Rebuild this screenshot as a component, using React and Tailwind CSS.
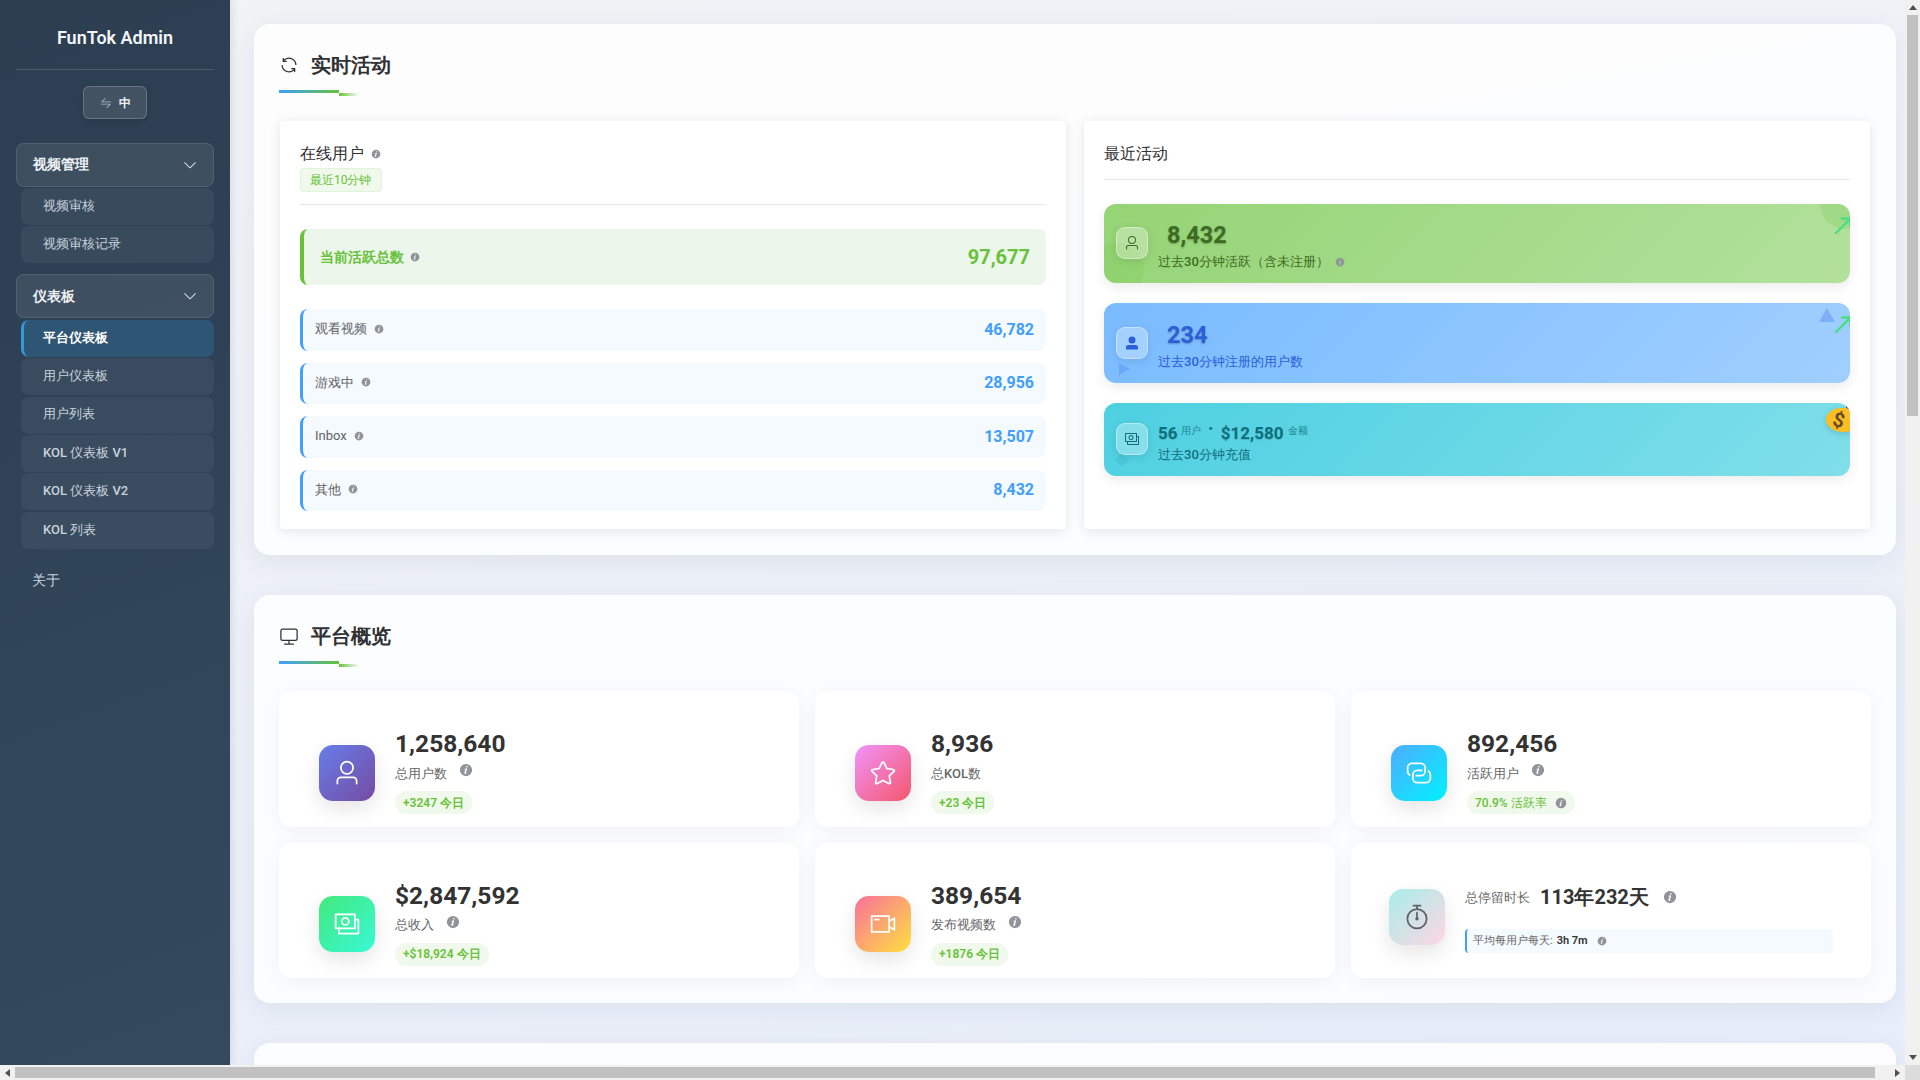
const P = {
  refresh: ["M771.776 794.88A384 384 0 0 1 128 512h64a320 320 0 0 0 555.712 216.448H654.72a32 32 0 1 1 0-64h149.056a32 32 0 0 1 32 32v148.928a32 32 0 1 1-64 0v-50.56zM276.288 295.616h92.992a32 32 0 0 1 0 64H220.16a32 32 0 0 1-32-32V178.56a32 32 0 0 1 64 0v50.56A384 384 0 0 1 896.128 512h-64a320 320 0 0 0-555.776-216.384z"],
  monitor: ["M544 768v128h192a32 32 0 1 1 0 64H288a32 32 0 1 1 0-64h192V768H192A128 128 0 0 1 64 640V256a128 128 0 0 1 128-128h640a128 128 0 0 1 128 128v384a128 128 0 0 1-128 128zM192 192a64 64 0 0 0-64 64v384a64 64 0 0 0 64 64h640a64 64 0 0 0 64-64V256a64 64 0 0 0-64-64z"],
  user: ["M512 512a192 192 0 1 0 0-384 192 192 0 0 0 0 384m0 64a256 256 0 1 1 0-512 256 256 0 0 1 0 512m320 320v-96a96 96 0 0 0-96-96H288a96 96 0 0 0-96 96v96a32 32 0 1 1-64 0v-96a160 160 0 0 1 160-160h448a160 160 0 0 1 160 160v96a32 32 0 1 1-64 0"],
  userFilled: ["M288 320a224 224 0 1 0 448 0 224 224 0 1 0-448 0m544 608H160a32 32 0 0 1-32-32v-96a160 160 0 0 1 160-160h448a160 160 0 0 1 160 160v96a32 32 0 0 1-32 32z"],
  money: [
    "M256 640v192h640V384H768v-64h150.976c14.272 0 19.456 1.472 24.64 4.288a29.056 29.056 0 0 1 12.16 12.096c2.752 5.184 4.224 10.368 4.224 24.64v493.952c0 14.272-1.472 19.456-4.288 24.64a29.056 29.056 0 0 1-12.096 12.16c-5.184 2.752-10.368 4.224-24.64 4.224H233.024c-14.272 0-19.456-1.472-24.64-4.288a29.056 29.056 0 0 1-12.16-12.096c-2.688-5.184-4.224-10.368-4.224-24.576V640z",
    "M768 192H128v448h640zm64-22.976v493.952c0 14.272-1.472 19.456-4.288 24.64a29.056 29.056 0 0 1-12.096 12.16c-5.184 2.752-10.368 4.224-24.64 4.224H105.024c-14.272 0-19.456-1.472-24.64-4.288a29.056 29.056 0 0 1-12.16-12.096C65.536 682.432 64 677.248 64 663.04V169.024c0-14.272 1.472-19.456 4.288-24.64a29.056 29.056 0 0 1 12.096-12.16C85.568 129.536 90.752 128 104.96 128h685.952c14.272 0 19.456 1.472 24.64 4.288a29.056 29.056 0 0 1 12.16 12.096c2.752 5.184 4.224 10.368 4.224 24.64z",
    "M448 576a160 160 0 1 1 0-320 160 160 0 0 1 0 320m0-64a96 96 0 1 0 0-192 96 96 0 0 0 0 192",
  ],
  star: ["m512 747.84 228.16 119.936a6.4 6.4 0 0 0 9.28-6.72l-43.52-254.08 184.512-179.904a6.4 6.4 0 0 0-3.52-10.88l-255.104-37.12L517.76 147.904a6.4 6.4 0 0 0-11.52 0L392.192 379.072l-255.104 37.12a6.4 6.4 0 0 0-3.52 10.88L318.08 606.976l-43.584 254.08a6.4 6.4 0 0 0 9.28 6.72zM313.6 924.48a70.4 70.4 0 0 1-102.144-74.24l37.888-220.928L88.96 472.96A70.4 70.4 0 0 1 128 352.896l221.76-32.256 99.2-200.96a70.4 70.4 0 0 1 126.208 0l99.2 200.96 221.824 32.256a70.4 70.4 0 0 1 39.04 120.064L774.72 629.376l37.888 220.928a70.4 70.4 0 0 1-102.144 74.24L512 820.096l-198.4 104.32z"],
  video: ["M704 768V256H128v512zm64-416 192-96v512l-192-96v128a32 32 0 0 1-32 32H96a32 32 0 0 1-32-32V224a32 32 0 0 1 32-32h640a32 32 0 0 1 32 32zm0 71.552v176.896l128 64V359.552zM192 320h192v64H192z"],
  connection: [
    "M640 384v64H448a128 128 0 0 0-128 128v128a128 128 0 0 0 128 128h320a128 128 0 0 0 128-128V576a128 128 0 0 0-64-110.848V394.88c74.56 26.368 128 97.472 128 181.056v128a192 192 0 0 1-192 192H448a192 192 0 0 1-192-192V576a192 192 0 0 1 192-192z",
    "M384 640v-64h192a128 128 0 0 0 128-128V320a128 128 0 0 0-128-128H256a128 128 0 0 0-128 128v128a128 128 0 0 0 64 110.848v70.272A192.064 192.064 0 0 1 64 448V320a192 192 0 0 1 192-192h320a192 192 0 0 1 192 192v128a192 192 0 0 1-192 192z",
  ],
  timer: [
    "M512 896a320 320 0 1 0 0-640 320 320 0 0 0 0 640m0 64a384 384 0 1 1 0-768 384 384 0 0 1 0 768",
    "M512 320a32 32 0 0 1 32 32l-.512 224a32 32 0 1 1-64 0L480 352a32 32 0 0 1 32-32",
    "M448 576a64 64 0 1 0 128 0 64 64 0 1 0-128 0m96-448v128h-64V128h-96a32 32 0 0 1 0-64h256a32 32 0 1 1 0 64z",
  ],
  info: ["M512 64a448 448 0 1 1 0 896.064A448 448 0 0 1 512 64m67.2 275.072c33.28 0 60.288-23.104 60.288-57.344s-27.072-57.344-60.288-57.344c-33.28 0-60.16 23.104-60.16 57.344s26.88 57.344 60.16 57.344M590.912 699.2c0-6.848 2.368-24.64 1.024-34.752l-52.608 60.544c-10.88 11.456-24.512 19.392-30.912 17.28a12.992 12.992 0 0 1-8.256-14.72l87.68-276.992c7.168-35.136-12.544-67.2-54.336-71.296-44.096 0-108.992 44.736-148.48 101.504 0 6.784-1.28 23.68.064 33.792l52.544-60.608c10.88-11.328 23.552-19.328 29.952-17.152a12.8 12.8 0 0 1 7.808 16.128L388.48 728.576c-10.048 32.256 8.96 63.872 55.04 71.04 67.84 0 107.904-43.648 147.456-100.416z"],
  down: ["M831.872 340.864 512 652.672 192.128 340.864a30.592 30.592 0 0 0-42.752 0 29.12 29.12 0 0 0 0 41.6L489.664 714.24a32 32 0 0 0 44.672 0l340.288-331.712a29.12 29.12 0 0 0 0-41.728 30.592 30.592 0 0 0-42.752 0z"],
  swap: ["M118.656 438.656a32 32 0 0 1 0-45.248L416 96l4.48-3.776A32 32 0 0 1 461.248 96l3.712 4.48a32.064 32.064 0 0 1-3.712 40.832L218.56 384H928a32 32 0 1 1 0 64H141.248a32 32 0 0 1-22.592-9.344zM64 608a32 32 0 0 1 32-32h786.752a32 32 0 0 1 22.656 54.592L608 928l-4.48 3.776a32.064 32.064 0 0 1-40.832-49.024L805.632 640H96a32 32 0 0 1-32-32"],
};

function Ic({ name, className }) {
  return (
    <svg viewBox="0 0 1024 1024" fill="currentColor" className={"shrink-0 " + className}>
      {P[name].map((d, i) => <path key={i} d={d} />)}
    </svg>
  );
}

function SubItem({ children, active }) {
  return (
    <div className={active
      ? "flex h-[37px] items-center ml-[5px] mb-[1.4px] rounded-[8px] border-l-[3px] border-[#3498db] bg-[#2f5574] pb-[2px] pl-[19px] text-[13px] font-semibold text-white"
      : "flex h-[37px] items-center ml-[5px] mb-[1.4px] rounded-[8px] bg-white/5 pb-[2px] pl-[22px] text-[13px] text-[#c9d2dc]"}>
      {children}
    </div>
  );
}

function Group({ title }) {
  return (
    <div className="flex h-[43.5px] items-center justify-between rounded-[8px] border border-white/10 bg-white/8 pl-[16px] pr-[15px] text-[14px] font-bold text-[#eef1f4]">
      <span>{title}</span>
      <Ic name="down" className="h-[16px] w-[16px] text-[#dfe5ea]" />
    </div>
  );
}

function Sidebar() {
  return (
    <aside className="flex h-full w-[230px] shrink-0 flex-col bg-[linear-gradient(160deg,#2c3e50,#34495e)] px-[16px] shadow-[2px_0_8px_rgba(0,0,0,0.1)]">
      <div className="flex h-[70px] items-center justify-center border-b border-white/15 pt-[6px] text-[18px] font-semibold text-[#f2f4f6]">FunTok Admin</div>
      <div className="mt-[16px] flex justify-center">
        <div className="flex h-[33px] w-[64px] items-center justify-center gap-[7px] rounded-[6px] border border-white/20 bg-white/10 text-[12px] font-bold text-[#eef1f4] shadow-[0_2px_6px_rgba(0,0,0,0.12)]">
          <Ic name="swap" className="h-[12px] w-[12px] text-[#aeb8c2]" />
          <span>中</span>
        </div>
      </div>
      <div className="mt-[24px]">
        <Group title="视频管理" />
        <div className="mt-[1.5px] mb-[11px]">
          <SubItem>视频审核</SubItem>
          <SubItem>视频审核记录</SubItem>
        </div>
        <Group title="仪表板" />
        <div className="mt-[2px]">
          <SubItem active>平台仪表板</SubItem>
          <SubItem>用户仪表板</SubItem>
          <SubItem>用户列表</SubItem>
          <SubItem><span className="font-medium">KOL</span>&nbsp;仪表板&nbsp;<span className="font-medium">V1</span></SubItem>
          <SubItem><span className="font-medium">KOL</span>&nbsp;仪表板&nbsp;<span className="font-medium">V2</span></SubItem>
          <SubItem><span className="font-medium">KOL</span>&nbsp;列表</SubItem>
        </div>
      </div>
      <div className="mt-[20px] pl-[16px] text-[14px] text-[#c9d2dc]">关于</div>
    </aside>
  );
}

function SectionHead({ icon, title }) {
  return (
    <div className="h-[96px] pl-[25px]">
      <div className="flex h-[81px] items-center gap-[12px]">
        <Ic name={icon} className="h-[20px] w-[20px] text-[#303133]" />
        <h2 className="text-[20px] font-bold leading-[28px] text-[#303133]">{title}</h2>
      </div>
      <div className="-mt-[15px] flex">
        <div className="h-[3px] w-[60px] bg-[linear-gradient(90deg,#409eff,#67c23a)]" />
        <div className="mt-[3px] h-[3px] w-[20px] bg-[linear-gradient(90deg,#67c23a,transparent)]" />
      </div>
    </div>
  );
}

function Row({ label, value }) {
  return (
    <div className="flex h-[41.5px] items-center justify-between rounded-[8px] border-l-[3px] border-[#409eff] bg-[#f5faff] pl-[12px] pr-[12px]">
      <div className="flex items-center gap-[7px] pb-[2px] text-[13px] text-[#606266]">
        <span>{label}</span>
        <Ic name="info" className="h-[10px] w-[10px] text-[#909399]" />
      </div>
      <span className="text-[16px] font-bold text-[#409eff]">{value}</span>
    </div>
  );
}

function OnlineCard() {
  return (
    <div className="w-[786px] rounded-[4px] bg-white px-[20px] pb-[18px] pt-[21px] shadow-[0_2px_12px_rgba(0,0,0,0.1)]">
      <div className="h-[62.5px] border-b border-[#e4e7ed]">
        <div className="flex h-[24px] items-center gap-[7px] text-[16px] text-[#303133]">
          <span>在线用户</span>
          <Ic name="info" className="h-[10px] w-[10px] text-[#909399]" />
        </div>
        <span className="mt-[2px] inline-flex h-[24px] items-center rounded-[4px] border border-[#e1f3d8] bg-[#f0f9eb] px-[9px] text-[12px] text-[#67c23a]">最近10分钟</span>
      </div>
      <div className="mt-[24.5px] flex h-[56px] items-center justify-between rounded-[8px] border-l-[4px] border-[#67c23a] bg-[#edf6ea] pl-[16px] pr-[16px]">
        <div className="flex items-center gap-[6px] text-[14px] font-bold text-[#67c23a]">
          <span>当前活跃总数</span>
          <Ic name="info" className="h-[10px] w-[10px] text-[#909399]" />
        </div>
        <span className="text-[20px] font-bold text-[#67c23a]">97,677</span>
      </div>
      <div className="mt-[24px] flex flex-col gap-[12px]">
        <Row label="观看视频" value="46,782" />
        <Row label="游戏中" value="28,956" />
        <Row label="Inbox" value="13,507" />
        <Row label="其他" value="8,432" />
      </div>
    </div>
  );
}

function CardIcon({ name, tint }) {
  return (
    <div className={"z-10 mt-[6px] flex h-[32px] w-[32px] shrink-0 items-center justify-center rounded-[9px] border border-white/40 bg-white/30 shadow-[0_2px_8px_rgba(0,0,0,0.1)] " + tint}>
      <Ic name={name} className="h-[16px] w-[16px]" />
    </div>
  );
}

function Arrow({ className }) {
  return (
    <svg viewBox="0 0 20 20" fill="none" stroke="#4ade80" strokeWidth="2.4" strokeLinecap="round" strokeLinejoin="round" className={"absolute h-[20px] w-[20px] " + className}>
      <path d="M2 17 16 3M8 2.5h8.5V11" />
    </svg>
  );
}

function RecentCard() {
  return (
    <div className="flex-1 rounded-[4px] bg-white px-[20px] pt-[20px] shadow-[0_2px_12px_rgba(0,0,0,0.1)]">
      <div className="h-[39px] border-b border-[#e4e7ed] text-[16px] leading-[26px] text-[#303133]">最近活动</div>
      <div className="mt-[24px] flex flex-col gap-[20px]">
        <div className="relative flex h-[79px] gap-[10px] overflow-hidden rounded-[12px] bg-[linear-gradient(135deg,#95d475,#b3e19d)] pl-[12px] pt-[17px] shadow-[0_4px_12px_rgba(0,0,0,0.08)]">
          <div className="absolute -bottom-[14px] -left-[14px] h-[54px] w-[54px] rounded-full bg-[#67c23a]/15" />
          <div className="absolute -right-[20px] -top-[25px] h-[50px] w-[50px] rounded-full bg-[#67c23a]/20" />
          <Arrow className="-right-[4px] top-[12px]" />
          <CardIcon name="user" tint="text-[#3d6b21]" />
          <div className="relative text-[#3d6b21]">
            <div className="pl-[9px] text-[23.5px] font-bold leading-[28px] [text-shadow:0_1px_2px_rgba(0,0,0,0.25)]">8,432</div>
            <div className="mt-[3px] flex items-center gap-[6px] text-[13px] leading-[20px]">
              <span>过去<span className="font-medium">30</span>分钟活跃（含未注册）</span>
              <Ic name="info" className="h-[10px] w-[10px] text-[#909399]" />
            </div>
          </div>
        </div>
        <div className="relative flex h-[80px] gap-[10px] overflow-hidden rounded-[12px] bg-[linear-gradient(135deg,#79bbff,#a0cfff)] pl-[12px] pt-[18px] shadow-[0_4px_12px_rgba(0,0,0,0.08)]">
          <div className="absolute left-[15px] top-[60px] h-0 w-0 border-y-[6px] border-l-[11px] border-y-transparent border-l-[#5a9cf5]/60" />
          <div className="absolute right-[15px] top-[5px] h-0 w-0 border-x-[8px] border-b-[14px] border-x-transparent border-b-[#5a8cf0]/45" />
          <Arrow className="-right-[4px] top-[12px]" />
          <CardIcon name="userFilled" tint="text-[#2b5fd9]" />
          <div className="relative text-[#2b5fd9]">
            <div className="pl-[9px] text-[23.5px] font-bold leading-[28px] [text-shadow:0_1px_2px_rgba(0,0,0,0.25)]">234</div>
            <div className="mt-[3px] text-[13px] leading-[20px]">过去<span className="font-medium">30</span>分钟注册的用户数</div>
          </div>
        </div>
        <div className="relative mb-[53px] flex h-[73px] gap-[10px] overflow-hidden rounded-[12px] bg-[linear-gradient(135deg,#4dd0e1,#80deea)] pl-[12px] pt-[14px] shadow-[0_4px_12px_rgba(0,0,0,0.08)]">
          <div className="absolute bottom-[11px] left-[13px] h-[10px] w-[10px] rotate-45 bg-[#26a6b8]/20" />
          <div className="absolute right-0 top-[1px] h-[5px] w-[4px] rounded-[2px] bg-[#6b4a2a]" />
          <div className="absolute -right-[8px] top-[5px] flex h-[24px] w-[32px] items-center justify-start rounded-[50%_50%_46%_54%] bg-[#fbbf24] pl-[7px] text-[20px] font-bold text-[#6b4a2a] shadow-[0_2px_6px_rgba(0,0,0,0.15)]">
            <span className="rotate-[15deg] leading-none">$</span>
          </div>
          <CardIcon name="money" tint="text-[#0f6f7d]" />
          <div className="relative text-[#0f6f7d]">
            <div className="flex h-[33px] items-center">
              <span className="text-[17px] font-bold leading-none [text-shadow:0_1px_1px_rgba(0,0,0,0.15)]">56</span>
              <span className="ml-[3px] -mt-[6px] text-[10px] opacity-80">用户</span>
              <span className="ml-[8px] -mt-[9px] text-[12px] font-bold">•</span>
              <span className="ml-[8px] text-[17px] font-bold leading-none [text-shadow:0_1px_1px_rgba(0,0,0,0.15)]">$12,580</span>
              <span className="ml-[4px] -mt-[6px] text-[10px] opacity-80">金额</span>
            </div>
            <div className="-mt-[5.5px] text-[13px] leading-[20px]">过去<span className="font-medium">30</span>分钟充值</div>
          </div>
        </div>
      </div>
    </div>
  );
}

function StatCard({ icon, grad, value, label, info, pill, pillInfo }) {
  return (
    <div className="flex items-center gap-[20px] rounded-[12px] bg-white pb-[12px] pl-[40px] pt-[40px] shadow-[0_4px_20px_rgba(0,0,0,0.05)]">
      <div className={"flex h-[56px] w-[56px] shrink-0 items-center justify-center rounded-[14px] text-white shadow-[0_8px_20px_rgba(0,0,0,0.1)] " + grad}>
        <Ic name={icon} className="h-[28px] w-[28px]" />
      </div>
      <div>
        <div className="pt-[1px] text-[24.5px] font-bold leading-[23px] text-[#333]">{value}</div>
        <div className="mt-[8px] flex h-[20px] items-center gap-[12px] text-[13px] text-[#666]">
          <span>{label}</span>
          {info && <Ic name="info" className="-mt-[6px] h-[14px] w-[14px] text-[#909399]" />}
        </div>
        <div className={"mt-[8px] inline-flex h-[23px] items-center gap-[8px] rounded-full bg-[#f0f9eb] px-[8px] text-[12px] text-[#67c23a] " + (pillInfo ? "font-medium" : "font-semibold")}>
          <span>{pill}</span>
          {pillInfo && <Ic name="info" className="h-[12px] w-[12px] text-[#909399]" />}
        </div>
      </div>
    </div>
  );
}

function DurationCard() {
  return (
    <div className="flex items-center gap-[20px] rounded-[12px] bg-white px-[38px] pt-[13px] shadow-[0_4px_20px_rgba(0,0,0,0.05)]">
      <div className="flex h-[56px] w-[56px] shrink-0 items-center justify-center rounded-[14px] bg-[linear-gradient(135deg,#a8edea,#fed6e3)] text-[#606266] shadow-[0_8px_20px_rgba(0,0,0,0.1)]">
        <Ic name="timer" className="h-[28px] w-[28px]" />
      </div>
      <div className="flex-1">
        <div className="flex h-[34px] items-center">
          <span className="text-[13px] text-[#666]">总停留时长</span>
          <span className="ml-[10px] text-[20px] font-bold text-[#333]">113年232天</span>
          <Ic name="info" className="ml-[14px] h-[14px] w-[14px] text-[#909399]" />
        </div>
        <div className="mt-[15px] flex h-[24px] items-center rounded-[4px] border-l-[2px] border-[#409eff] bg-[#f5faff] pl-[6px] text-[11px]">
          <span className="text-[#666]">平均每用户每天:</span>
          <span className="ml-[4px] font-semibold text-[#303133]">3h 7m</span>
          <Ic name="info" className="ml-[9px] h-[10px] w-[10px] text-[#909399]" />
        </div>
      </div>
    </div>
  );
}

const secCls = "shrink-0 rounded-[16px] bg-white/85 shadow-[0_6px_28px_rgba(30,40,70,0.07)]";

function VScroll() {
  return (
    <div className="flex w-[15px] shrink-0 flex-col items-center bg-[#f1f1f1]">
      <div className="flex h-[15px] items-center justify-center">
        <div className="h-0 w-0 border-x-[4px] border-b-[5px] border-x-transparent border-b-[#505050]" />
      </div>
      <div className="h-[401px] w-[11px] bg-[#c1c1c1]" />
      <div className="flex-1" />
      <div className="flex h-[15px] items-center justify-center">
        <div className="h-0 w-0 border-x-[4px] border-t-[5px] border-x-transparent border-t-[#505050]" />
      </div>
    </div>
  );
}

function HScroll() {
  return (
    <div className="flex h-[15px] shrink-0">
      <div className="flex w-[1905px] items-center bg-[#f1f1f1]">
        <div className="flex h-[15px] w-[15px] items-center justify-center">
          <div className="h-0 w-0 border-y-[4px] border-r-[5px] border-y-transparent border-r-[#505050]" />
        </div>
        <div className="h-[11px] w-[1860px] bg-[#c1c1c1]" />
        <div className="flex-1" />
        <div className="flex h-[15px] w-[15px] items-center justify-center">
          <div className="h-0 w-0 border-y-[4px] border-l-[5px] border-y-transparent border-l-[#505050]" />
        </div>
      </div>
      <div className="w-[15px] bg-[#dcdcdc]" />
    </div>
  );
}

export default function App() {
  return (
    <div className="flex h-screen w-screen flex-col overflow-hidden font-['Roboto',sans-serif]">
      <div className="flex min-h-0 flex-1">
        <div className="flex min-w-0 flex-1 overflow-hidden bg-[linear-gradient(170deg,#f1f3f6,#e8eefa)]">
          <Sidebar />
          <main className="flex min-w-0 flex-1 flex-col gap-[40px] overflow-hidden pl-[24px] pr-[9px] pt-[24px]">
            <section className={secCls + " h-[531px]"}>
              <SectionHead icon="refresh" title="实时活动" />
              <div className="flex gap-[18px] pl-[26px] pr-[26px] pt-[1px]">
                <OnlineCard />
                <RecentCard />
              </div>
            </section>
            <section className={secCls + " h-[408px]"}>
              <SectionHead icon="monitor" title="平台概览" />
              <div className="grid auto-rows-[135.5px] grid-cols-3 gap-[16px] px-[25px]">
                <StatCard icon="user" grad="bg-[linear-gradient(135deg,#667eea,#764ba2)]" value="1,258,640" label="总用户数" info pill="+3247 今日" />
                <StatCard icon="star" grad="bg-[linear-gradient(135deg,#f093fb,#f5576c)]" value="8,936" label={<>总<span className="font-medium">KOL</span>数</>} pill="+23 今日" />
                <StatCard icon="connection" grad="bg-[linear-gradient(135deg,#4facfe,#00f2fe)]" value="892,456" label="活跃用户" info pill="70.9% 活跃率" pillInfo />
                <StatCard icon="money" grad="bg-[linear-gradient(135deg,#43e97b,#38f9d7)]" value="$2,847,592" label="总收入" info pill="+$18,924 今日" />
                <StatCard icon="video" grad="bg-[linear-gradient(135deg,#fa709a,#fee140)]" value="389,654" label="发布视频数" info pill="+1876 今日" />
                <DurationCard />
              </div>
            </section>
            <section className={secCls + " h-[200px]"} />
          </main>
        </div>
        <VScroll />
      </div>
      <HScroll />
    </div>
  );
}
